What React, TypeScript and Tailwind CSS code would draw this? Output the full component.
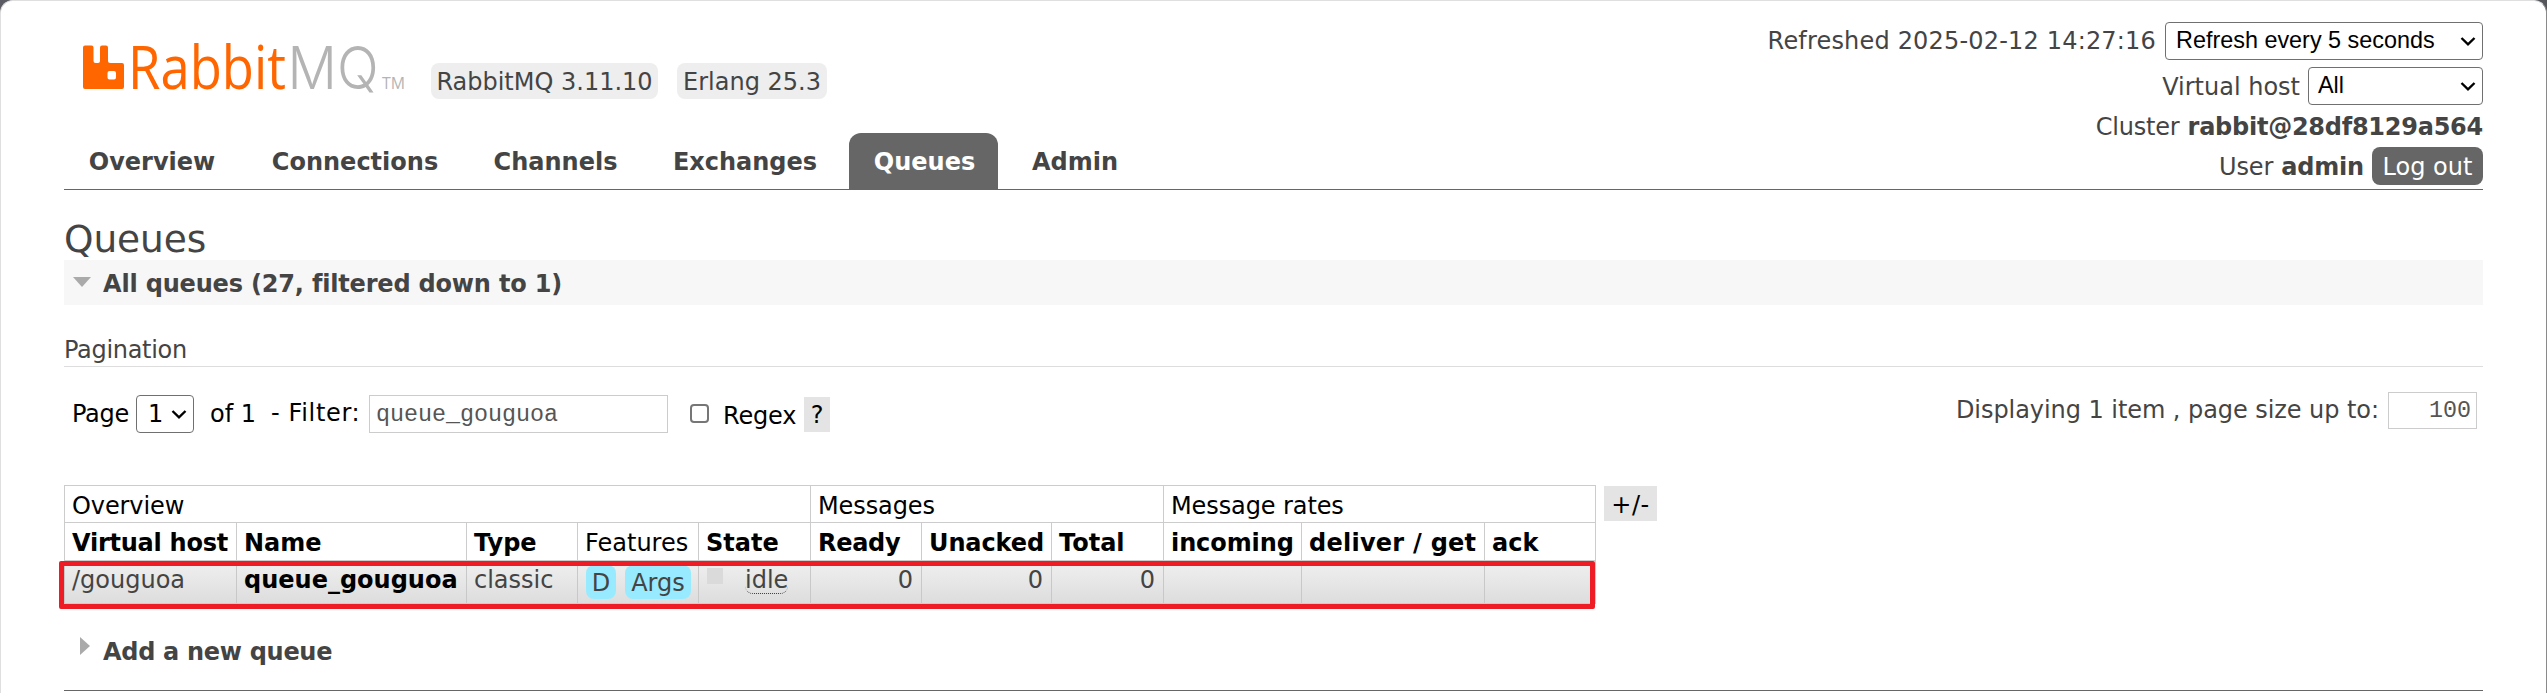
import type { ReactNode } from "react";

function Chevron() {
  return (
    <svg className="shrink-0" width="16" height="9" viewBox="0 0 16 9" fill="none" stroke="currentColor" strokeWidth="2.4">
      <path d="M1.5 1l6.500 6.300L14.500 1" />
    </svg>
  );
}

function SelectBox({ label, className }: { label: string; className: string }) {
  return (
    <div className={`flex h-[38px] items-center justify-between rounded-[4px] border border-[#707070] bg-white pr-[6px] text-black ${className}`}>
      <span>{label}</span>
      <Chevron />
    </div>
  );
}

const tabs = [
  { name: "Overview", width: "w-[174px]" },
  { name: "Connections", width: "w-[212px]" },
  { name: "Channels", width: "w-[169px]" },
  { name: "Exchanges", width: "w-[190px]" },
  { name: "Queues", width: "w-[149px]", active: true },
  { name: "Admin", width: "w-[132px]" },
];

function Logo() {
  return (
    <svg className="ml-[19px] block h-[60px] w-[326px] shrink-0 overflow-visible" viewBox="0 0 326 60" fontFamily="'Open Sans', sans-serif">
      <path
        fill="#ff6600"
        fillRule="evenodd"
        d="M2 5.500h6.500q2 0 2 2V21q0 2 2 2H15q2 0 2-2V7.500q0-2 2-2h4q2 0 2 2V21q0 2 2 2h12q2 0 2 2v22q0 2-2 2H2q-2 0-2-2V7.500q0-2 2-2ZM26.500 31q-2 0-2 2v4.500q0 2 2 2H31q2 0 2-2V33q0-2-2-2Z"
      />
      <text x="45" y="48.600" fontSize="60" fill="#ff6600" textLength="158" lengthAdjust="spacingAndGlyphs">
        Rabbit
      </text>
      <text x="204.500" y="48.600" fontSize="59.500" fontWeight="300" fill="#b4b4b4" fontFamily="Inter, sans-serif" textLength="91" lengthAdjust="spacingAndGlyphs">
        MQ
      </text>
      <text x="299" y="48.600" fontSize="15.500" fill="#b4b4b4" textLength="23" lengthAdjust="spacingAndGlyphs">
        TM
      </text>
    </svg>
  );
}

function Header() {
  return (
    <header className="flex h-[189px] justify-between border-b border-[#666]">
      <div className="flex flex-col">
        <div className="flex h-[132px] items-start pt-[39px]">
          <Logo />
          <div className="mt-[23px] ml-[22px] flex gap-[19px]">
            <span className="flex h-[36px] w-[227px] items-center justify-center rounded-[8px] bg-[#eee] pt-[2px]">RabbitMQ 3.11.10</span>
            <span className="flex h-[36px] w-[150px] items-center justify-center rounded-[8px] bg-[#eee] pt-[2px]">Erlang 25.3</span>
          </div>
        </div>
        <nav className="flex h-[56px] gap-[10px] font-bold">
          {tabs.map((t) => (
            <a key={t.name} className={`flex items-center justify-center pt-[2px] pl-[2px] ${t.width} ${t.active ? "rounded-t-[12px] bg-[#666] text-white" : ""}`}>
              {t.name}
            </a>
          ))}
        </nav>
      </div>
      <div className="flex flex-col items-end pt-[21px]">
        <div className="flex h-[38px] items-center gap-[9px]">
          <span className="tracking-[0.18px]">Refreshed 2025-02-12 14:27:16</span>
          <SelectBox label="Refresh every 5 seconds" className="w-[318px] pl-[10px] font-['Liberation_Sans',sans-serif] text-[23.4px]" />
        </div>
        <div className="mt-[7px] flex h-[38px] items-center gap-[8px]">
          <span className="pt-px">Virtual host</span>
          <SelectBox label="All" className="w-[175px] pl-[9px] font-['Liberation_Sans',sans-serif] text-[23.4px]" />
        </div>
        <div className="flex h-[42px] items-center gap-[8px] pt-px">
          <span className="tracking-[-0.2px]">Cluster</span>
          <b className="tracking-[-0.25px]">rabbit@28df8129a564</b>
        </div>
        <div className="flex h-[38px] items-center gap-[8px]">
          <span className="pt-[2px] tracking-[-0.1px]">User</span>
          <b className="pt-[2px] tracking-[-0.2px]">admin</b>
          <span className="flex h-[38px] w-[111px] items-center justify-center rounded-[8px] bg-[#666] pt-px text-white">Log out</span>
        </div>
      </div>
    </header>
  );
}

function FilterRow() {
  return (
    <div className="mt-[28px] flex h-[37px] items-start leading-[37px] text-black">
      <span className="ml-[8px] w-[64px] shrink-0 pt-px tracking-[-0.3px]">Page</span>
      <SelectBox label="1" className="w-[58px] pl-[11px]" />
      <span className="ml-[16px] w-[61px] shrink-0 pt-px">of 1</span>
      <span className="w-[98px] shrink-0 leading-[37px] tracking-[0.65px]">- Filter:</span>
      <div className="h-[38px] w-[299px] border border-[#ccc] pl-[6px] font-['Liberation_Mono',monospace] text-[23.33px] leading-[38px] text-[#555]">queue_gouguoa</div>
      <div className="mt-[9px] ml-[22px] size-[19px] rounded-[4px] border-2 border-[#767676]" />
      <span className="ml-[14px] w-[81px] shrink-0 pt-[3px] tracking-[-0.2px]">Regex</span>
      <span className="mt-[2px] flex h-[35px] w-[26px] items-center justify-center bg-[#e4e4e4] pt-[2px]">?</span>
      <span className="mt-[-3px] ml-auto tracking-[-0.06px] text-[#444]">Displaying 1 item , page size up to:</span>
      <div className="mt-[-3px] mr-[6px] ml-[9px] h-[37px] w-[89px] border border-[#ccc] pr-[5px] text-right font-['Liberation_Mono',monospace] text-[23.33px] leading-[37px] text-[#555]">100</div>
    </div>
  );
}

const groups = [
  { name: "Overview", span: "col-span-5" },
  { name: "Messages", span: "col-span-3" },
  { name: "Message rates", span: "col-span-3" },
];

const columns = [
  { name: "Virtual host", style: "font-bold tracking-[-0.25px]" },
  { name: "Name", style: "font-bold" },
  { name: "Type", style: "font-bold" },
  { name: "Features", style: "" },
  { name: "State", style: "font-bold" },
  { name: "Ready", style: "font-bold tracking-[-0.3px]" },
  { name: "Unacked", style: "font-bold tracking-[-0.1px]" },
  { name: "Total", style: "font-bold" },
  { name: "incoming", style: "font-bold tracking-[-0.1px]" },
  { name: "deliver / get", style: "font-bold tracking-[0.25px]" },
  { name: "ack", style: "font-bold" },
];

function Cell({ children, className = "" }: { children?: ReactNode; className?: string }) {
  return <div className={`flex items-start border-l border-[#c8c8c8] leading-[38px] whitespace-nowrap ${className}`}>{children}</div>;
}

function QueueTable() {
  return (
    <div className="mt-[53px] flex items-start">
      <div className="relative w-[1532px] border-r border-b border-[#ccc]">
        <div className="grid grid-cols-[172px_230px_111px_121px_112px_111px_130px_112px_138px_183px_111px] grid-rows-[37px_38px_43px] text-black">
          {groups.map((g) => (
            <div key={g.name} className={`flex items-center border-t border-l border-[#ccc] pt-[4px] pl-[7px] tracking-[-0.1px] ${g.span}`}>
              {g.name}
            </div>
          ))}
          {columns.map((c) => (
            <div key={c.name} className={`flex items-center border-t border-l border-[#ccc] pt-[3px] pl-[7px] whitespace-nowrap ${c.style}`}>
              {c.name}
            </div>
          ))}
          <div className="col-span-11 grid grid-cols-subgrid border-t border-[#ccc] bg-linear-to-b from-[#f0f0f0] to-[#dddddd] text-[#444]">
            <Cell className="pl-[7px]">/gouguoa</Cell>
            <Cell className="pl-[7px] font-bold text-black">queue_gouguoa</Cell>
            <Cell className="pl-[7px]">classic</Cell>
            <Cell className="gap-[9px] pl-[8px]">
              <span className="mt-[4px] h-[34px] w-[30px] rounded-[8px] bg-[#98ebff] text-center leading-[37px]">D</span>
              <span className="mt-[4px] h-[34px] w-[66px] rounded-[8px] bg-[#98ebff] text-center leading-[37px]">Args</span>
            </Cell>
            <Cell className="pl-[8px]">
              <span className="mt-[7px] size-[16px] bg-[#dadada]" />
              <span className="mt-[2px] ml-[22px] h-[31px] rounded-[8px] border-b border-dotted border-[#444] leading-[34px]">idle</span>
            </Cell>
            <Cell className="justify-end pr-[8px]">0</Cell>
            <Cell className="justify-end pr-[8px]">0</Cell>
            <Cell className="justify-end pr-[8px]">0</Cell>
            <Cell />
            <Cell />
            <Cell />
          </div>
        </div>
        <div className="absolute top-[76px] left-[-5px] h-[48px] w-[1536px] rounded-[2px] border-[5px] border-[#ee1c24]" />
      </div>
      <span className="mt-px ml-[8px] flex h-[35px] w-[53px] items-center justify-center bg-[#e4e4e4] pt-[2px] tracking-[0.5px] text-black">+/-</span>
    </div>
  );
}

export default function App() {
  return (
    <div className="h-[693px] w-full overflow-hidden bg-[linear-gradient(90deg,#5b5b63,#55565b)] font-['DejaVu_Sans',Verdana,sans-serif] text-[24px] leading-none text-[#444]">
      <div className="h-[705px] rounded-[13px] border border-[#dfdfdf] border-r-[#8a8a8a] bg-white px-[63px]">
        <Header />
        <main>
          <h1 className="mt-[27px] text-[37.5px] leading-[44px] tracking-[-0.1px]">Queues</h1>
          <h2 className="mt-[-1px] flex h-[45px] items-center bg-[#f7f7f7] pt-[3px] pl-[9px] font-bold">
            <svg className="mt-[-5px] mr-[12px]" width="18" height="10" viewBox="0 0 18 10">
              <path d="M0 0h18L9 10z" fill="#aaa" />
            </svg>
            <span className="tracking-[-0.18px]">All queues (27, filtered down to 1)</span>
          </h2>
          <h3 className="mt-[27px] h-[35px] border-b border-[#ddd] leading-[36px] tracking-[-0.3px]">Pagination</h3>
          <FilterRow />
          <QueueTable />
          <h2 className="mt-[24px] flex h-[45px] items-center pt-[2px] pl-[16px] font-bold">
            <svg className="mt-[-12px] mr-[13px]" width="10" height="18" viewBox="0 0 10 18">
              <path d="M0 0v18l10-9z" fill="#aaa" />
            </svg>
            <span className="tracking-[-0.3px]">Add a new queue</span>
          </h2>
          <div className="mt-[17px] border-t border-[#666]" />
        </main>
      </div>
    </div>
  );
}
